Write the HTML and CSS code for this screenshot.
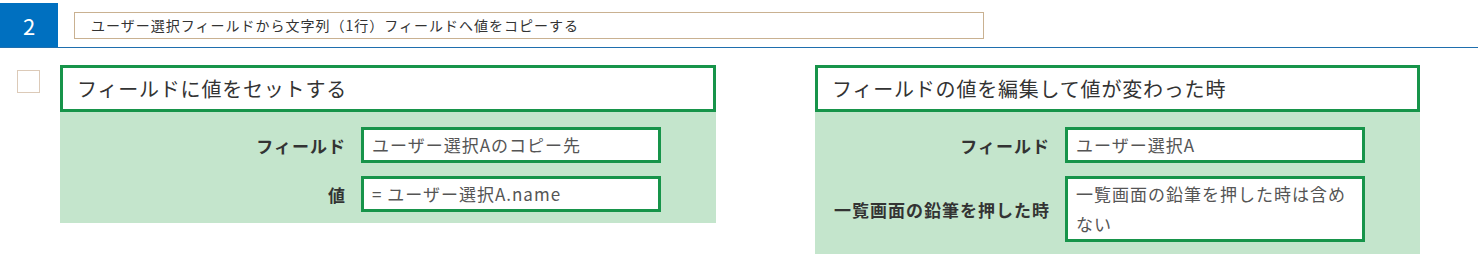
FILE: index.html
```html
<!DOCTYPE html>
<html lang="ja">
<head>
    <meta charset="UTF-8">
    <title>アクション 2</title>
    <link rel="stylesheet" href="styles.css">
</head>
<body>
    <div class="header">
        <div class="step-no">2</div>
        <div class="step-title">ユーザー選択フィールドから文字列（1行）フィールドへ値をコピーする</div>
    </div>
    <div class="content">
        <div class="check"></div>
        <div class="card card-action">
            <div class="card-title">フィールドに値をセットする</div>
            <div class="card-body">
                <div class="row">
                    <div class="label">フィールド</div>
                    <div class="value">ユーザー選択Aのコピー先</div>
                </div>
                <div class="row">
                    <div class="label">値</div>
                    <div class="value">= ユーザー選択A.name</div>
                </div>
            </div>
        </div>
        <div class="card card-trigger">
            <div class="card-title">フィールドの値を編集して値が変わった時</div>
            <div class="card-body">
                <div class="row">
                    <div class="label">フィールド</div>
                    <div class="value">ユーザー選択A</div>
                </div>
                <div class="row">
                    <div class="label">一覧画面の鉛筆を押した時</div>
                    <div class="value">一覧画面の鉛筆を押した時は含めない</div>
                </div>
            </div>
        </div>
    </div>
</body>
</html>
```

FILE: styles.css
```css
body {
    font-family: "Noto Sans CJK JP", "Noto Sans", sans-serif;
    background-color: #ffffff;
    color: #333333;
    margin: 0;
}
.header {
    display: flex;
    align-items: center;
    padding-top: 3px;
    border-bottom: 1px solid #1f6fae;
}
.step-no {
    width: 58px;
    height: 44px;
    background-color: #0070c0;
    color: #ffffff;
    font-size: 22px;
    line-height: 44px;
    text-align: center;
}
.step-title {
    margin-left: 16px;
    width: 892px;
    height: 25px;
    line-height: 25px;
    padding-left: 16px;
    border: 1px solid #c9b191;
    font-size: 14px;
    letter-spacing: 1px;
}
.content {
    display: flex;
    align-items: flex-start;
    padding-top: 17px;
}
.check {
    width: 21px;
    height: 21px;
    margin: 5px 0 0 17px;
    border: 1px solid #dccab8;
}
.card-action {
    width: 656px;
    margin-left: 20px;
}
.card-trigger {
    width: 605px;
    margin-left: 99px;
}
.card-title {
    height: 41px;
    line-height: 41px;
    padding-left: 14px;
    border: 3px solid #17944a;
    font-size: 20px;
    letter-spacing: 0.8px;
    background-color: #ffffff;
}
.card-body {
    background-color: #c4e5cc;
    padding: 15px 55px 11px 0;
    display: flex;
    flex-direction: column;
    gap: 13px;
}
.card-trigger .card-body {
    padding-bottom: 12px;
}
.row {
    display: flex;
    align-items: center;
}
.label {
    flex: 1;
    text-align: right;
    padding-right: 15px;
    font-size: 17px;
    letter-spacing: 1px;
    font-weight: bold;
}
.value {
    width: 278px;
    padding: 0 8px;
    line-height: 30px;
    border: 3px solid #17944a;
    background-color: #ffffff;
    color: #555555;
    font-size: 17px;
    letter-spacing: 1px;
}
```
